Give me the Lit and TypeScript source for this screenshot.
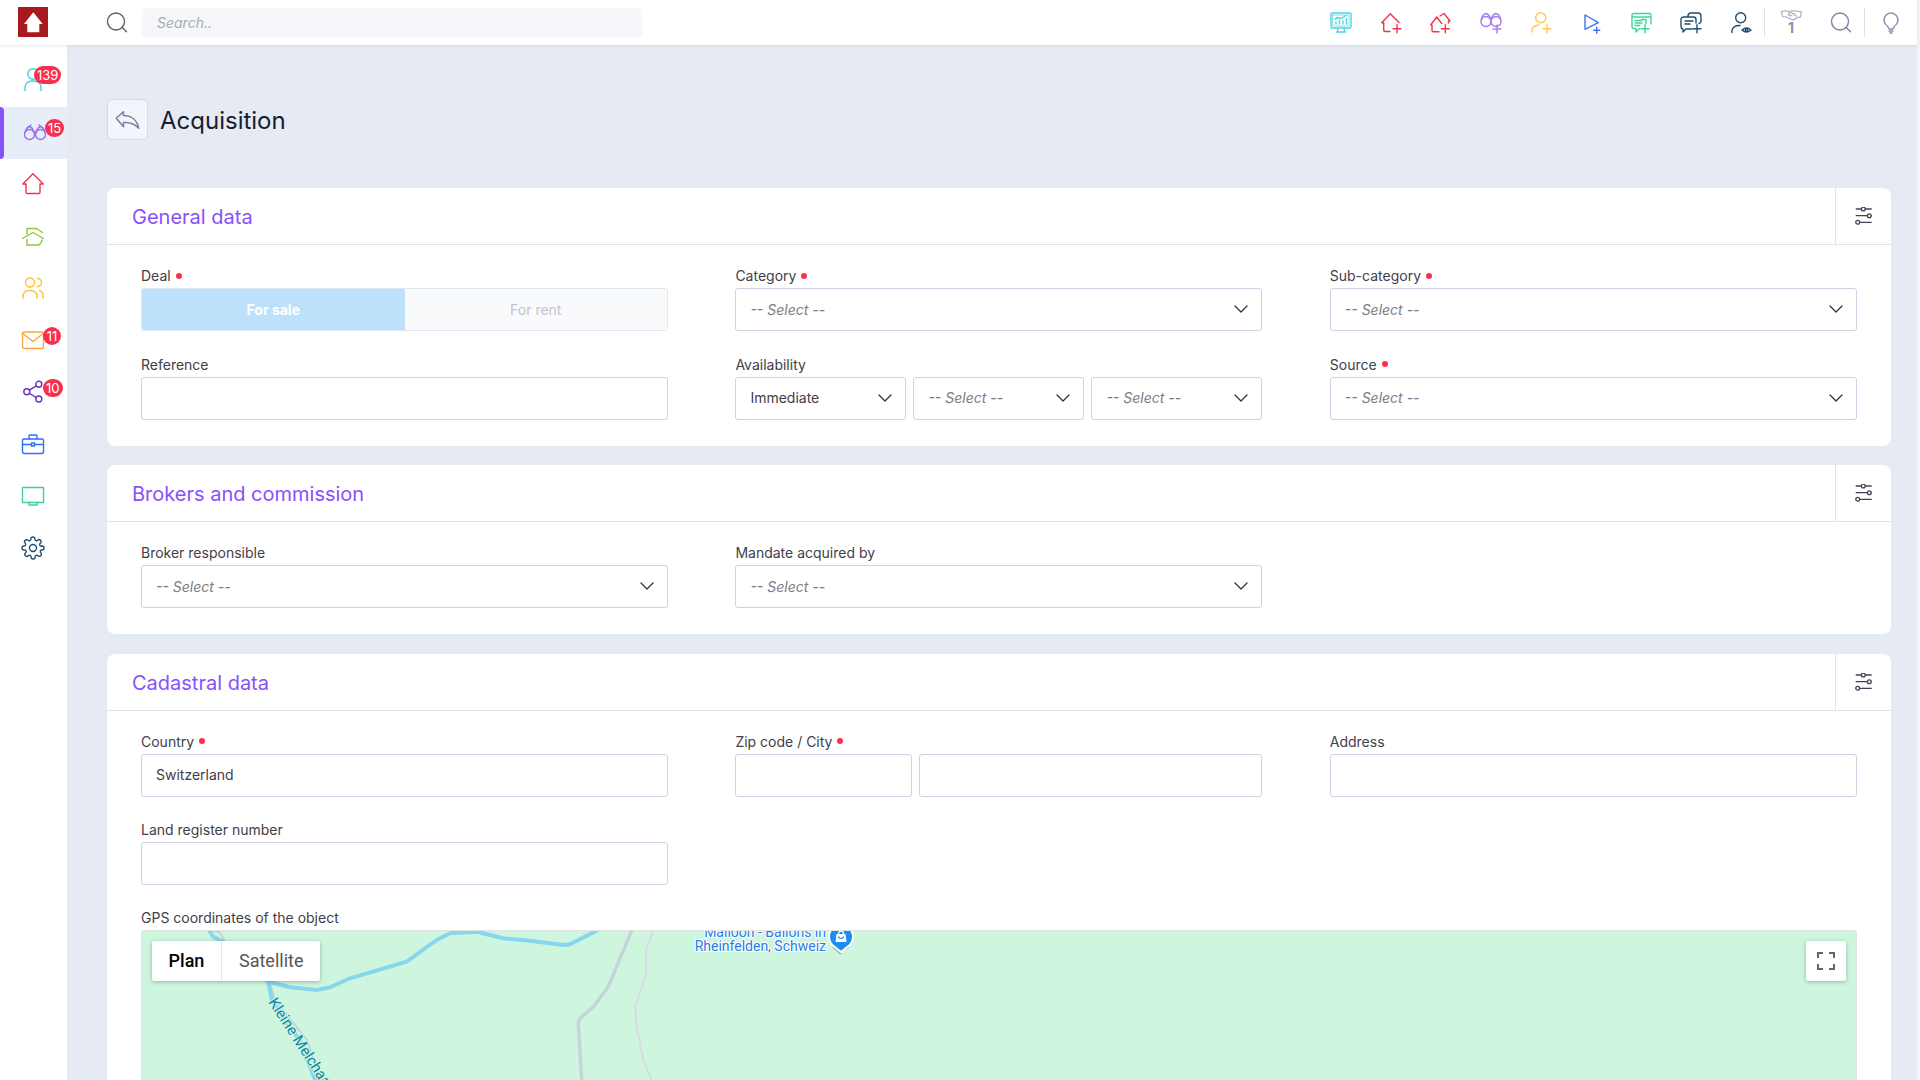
import { LitElement, html, svg, css } from 'lit';
import { customElement } from 'lit/decorators.js';

const icon = (body: unknown, size = 24, box = '0 0 24 24') => html`<svg
  width=${size} height=${size} viewBox=${box} fill="none" stroke="currentColor"
  stroke-width="1.4" stroke-linecap="round" stroke-linejoin="round">${body}</svg>`;

const sideIcons = {
  user: icon(svg`<circle cx="12" cy="6" r="5.2"/><path d="M4 22.5v-3.5a7 6 0 0 1 7-6h2a7 6 0 0 1 7 6v3.500"/>`),
  binoculars: icon(svg`<circle cx="6.500" cy="14.500" r="5"/><circle cx="17.500" cy="14.500" r="5"/><path d="M2.200 12Q3 8 6 6.500q3 .5 4.500 4.500l1 1.500M21.800 12Q21 8 18 6.500q-3 .5-4.500 4.500l-1 1.500M11.500 14h1M6 6.500 8 5M18 6.500 16 5"/>`),
  house: icon(svg`<path d="M1.800 12 12 1.800 22.200 12H19v8.500a1 1 0 0 1-1 1H6a1 1 0 0 1-1-1V12Z"/>`),
  deal: icon(svg`<path d="M1.500 14.500 12 8.500l10.500 6M6 10V4.500h9.500l6 4M6 15.500V21h11q3-.5 4-5"/>`),
  users: icon(svg`<circle cx="9" cy="6.500" r="4.500"/><path d="M2 22.500v-2.500a6 5.500 0 0 1 6-5.500h2a6 5.500 0 0 1 6 5.500v2.500M16.500 2.500a4 4 0 0 1 0 8M18.500 14.500a5.500 5.500 0 0 1 3.500 5.500v2.500"/>`),
  mail: icon(svg`<rect x="1.500" y="4" width="21" height="16.500" rx="2"/><path d="M2.500 6 12 13.500 21.500 6"/>`),
  share: icon(svg`<circle cx="5.800" cy="11.700" r="3"/><circle cx="17.800" cy="4.300" r="3"/><circle cx="17.800" cy="19" r="3"/><path d="m8.400 10.200 6.800-4.300M8.400 13.300l6.800 4.200"/>`),
  briefcase: icon(svg`<rect x="1.500" y="7" width="21" height="14.500" rx="1.500"/><path d="M8 7V4a1 1 0 0 1 1-1h6a1 1 0 0 1 1 1v3M1.500 12.500h9M13.500 12.500h9"/><rect x="10.500" y="11" width="3" height="3"/>`),
  monitor: icon(svg`<rect x="1.500" y="3.500" width="21" height="15"/><path d="M8 18.500v2.500h8v-2.500"/>`),
  gear: icon(svg`<circle cx="12" cy="12" r="3.500"/><path d="M19.400 15a1.650 1.650 0 0 0 .33 1.820l.06.06a2 2 0 1 1-2.830 2.830l-.06-.06a1.650 1.650 0 0 0-2.800 1.170V21a2 2 0 0 1-4 0v-.09a1.650 1.650 0 0 0-2.820-1.110l-.06.06a2 2 0 1 1-2.830-2.830l.06-.06A1.650 1.650 0 0 0 3.090 14H3a2 2 0 0 1 0-4h.09A1.650 1.650 0 0 0 4.200 7.180l-.06-.06a2 2 0 1 1 2.830-2.830l.06.06A1.650 1.650 0 0 0 9.850 3.090V3a2 2 0 0 1 4 0v.09a1.650 1.650 0 0 0 2.800 1.110l.06-.06a2 2 0 1 1 2.830 2.830l-.06.06A1.650 1.650 0 0 0 20.910 10H21a2 2 0 0 1 0 4h-.09a1.650 1.650 0 0 0-1.510 1Z"/>`),
};

const plus = (x = 18, y = 17.7, a = 4) => svg`<path d="M${x} ${y - a}v${a * 2}M${x - a} ${y}h${a * 2}"/>`;

const searchGlass = svg`<circle cx="11" cy="10.500" r="8.500"/><path d="m17.300 16.500 4.200 4.200"/>`;

const topIcons = [
  { color: '#4fd3e3', svg: icon(svg`<rect x="2" y="2" width="20" height="15" rx="1"/><rect x="4" y="4" width="16" height="11" stroke-width=".7"/><path d="M7 13v-2M10.500 13V9.500M14 13v-3M17.500 13V7.500M6 8l3-1.500 3 1 5-3M9 17l-.5 3.500M15 17l.5 3.500M7.500 21h9"/>`) },
  { color: '#f5324b', svg: icon(svg`<path d="M2.700 11.700 11.300 2.700 20 11.500M2.700 11.700h2V19a1.500 1.500 0 0 0 1.500 1.500H11"/>${plus()}`) },
  { color: '#f5324b', svg: icon(svg`<path d="M1.700 14 7.700 6l5 6.500M3 14v5.200a1.500 1.500 0 0 0 1.500 1.500H10M11 5l4-2.500 6 7.500h-1.500v2"/>${plus(16.3)}`) },
  { color: '#a27cf0', svg: icon(svg`<circle cx="7" cy="10.500" r="5"/><circle cx="17" cy="10.500" r="5"/><path d="M2.200 9Q3.500 3 7 2.500q3 .5 4.500 5M21.800 9Q20.500 3 17 2.500q-3 .5-4.500 5"/>${plus(18, 18, 4)}`) },
  { color: '#fdc94f', svg: icon(svg`<circle cx="11.700" cy="6.700" r="5"/><path d="M3 21v-2a7 5.500 0 0 1 7-5"/>${plus()}`) },
  { color: '#3b74f6', svg: icon(svg`<path d="M6 4 19.300 11.700 6 18.300Z"/>${plus(17.7, 19.3, 3)}`) },
  { color: '#42d39c', svg: icon(svg`<path d="M7 17.500H4.500a1.500 1.500 0 0 1-1.500-1.500V4a1.500 1.500 0 0 1 1.500-1.500h16A1.500 1.500 0 0 1 22 4v9M3 6h19M6 9.500h7M6 12h7M6 14.500h5M13 8.500h4v4M7 17.500v3.500l3.500-3.500"/>${plus(16, 17.7)}`) },
  { color: '#1f4e6e', svg: icon(svg`<path d="M13 18H7l-3 3v-3a2.500 2.500 0 0 1-2-2.500V8.500A2.500 2.500 0 0 1 4.500 6h10A2.500 2.500 0 0 1 17 8.500v3.500M6 10h8M6 13h5M9 6V5a3 3 0 0 1 3-3h7a3 3 0 0 1 3 3v5a2.500 2.500 0 0 1-2 2.500"/>${plus()}`) },
  { color: '#1f4e6e', svg: icon(svg`<circle cx="11.700" cy="6.700" r="5"/><path d="M3 21.500v-2a7 5.500 0 0 1 8-5M13 19q4.500-4 9 0q-4.500 4-9 0Z"/><circle cx="17.500" cy="19" r="1.200"/>`) },
];

const grid3 = (items: unknown[]) => html`<div class="grid">${items}</div>`;

const field = (label: string, required: boolean, control: unknown) => html`
  <div class="field">
    <label>${label}${required ? html`<i class="dot"></i>` : ''}</label>
    ${control}
  </div>`;

const chevron = html`<svg class="chev" width="14" height="8" viewBox="0 0 14 8" fill="none" stroke="#2f3040" stroke-width="1.300" stroke-linecap="round" stroke-linejoin="round"><path d="m1 1 6 6 6-6"/></svg>`;

const select = (value = '') => html`
  <div class="box select">
    <span class=${value ? 'val' : 'ph'}>${value || '-- Select --'}</span>${chevron}
  </div>`;

const input = (value = '') => html`<div class="box">${value ? html`<span class="val">${value}</span>` : ''}</div>`;

@customElement('app-root')
export class AppRoot extends LitElement {
  static styles = css`
    :host {
      display: flex;
      height: 100vh;
      overflow: hidden;
      font-family: Inter, "Liberation Sans", sans-serif;
      font-size: 14px;
      color: #3f4049;
      background: #f4f4f5;
    }
    :host * {
      box-sizing: border-box;
    }
    .page {
      width: 1917px;
      flex: none;
      display: flex;
      flex-direction: column;
      background: #e6eaf3;
    }

    .top {
      height: 45px;
      flex: none;
      display: flex;
      align-items: center;
      background: #fff;
      box-shadow: 0 1px 4px rgba(60, 70, 110, 0.12);
      position: relative;
      z-index: 2;
      padding-right: 1px;
    }
    .logo {
      width: 30px;
      height: 30px;
      margin: 0 0 1px 18px;
      background: #a6191f;
      flex: none;
      display: block;
    }
    .top-search {
      width: 24px;
      height: 24px;
      margin-left: 57px;
      color: #5f6068;
      display: flex;
    }
    .search {
      width: 500px;
      height: 30px;
      margin-left: 13px;
      background: #f5f7fb;
      border-radius: 4px;
      padding-left: 15px;
      font-style: italic;
      color: #a9abb5;
      display: flex;
      align-items: center;
    }
    .top-icons {
      margin-left: auto;
      display: flex;
      align-items: center;
    }
    .ti {
      width: 50px;
      height: 29px;
      display: flex;
      align-items: center;
      justify-content: center;
    }
    .sep {
      width: 52px;
      margin-left: -2px;
      padding-left: 1px;
      border-left: 1px solid #dcdfea;
    }
    .hand {
      flex-direction: column;
      color: #a9acc4;
      font-weight: 700;
      font-size: 14px;
      line-height: 14px;
    }
    .hand span {
      color: #8a8fa8;
    }

    .body {
      flex: 1;
      display: flex;
      min-height: 0;
    }
    .side {
      width: 67px;
      flex: none;
      background: #fff;
      padding-top: 10px;
    }
    .si {
      height: 52px;
      display: flex;
      align-items: center;
      justify-content: center;
      position: relative;
      padding-right: 1px;
      padding-bottom: 2px;
    }
    .si.active {
      background: #e8eef8;
    }
    .si.active::before {
      content: "";
      position: absolute;
      left: 0;
      top: 0;
      bottom: 0;
      width: 4px;
      background: #8950fc;
      border-radius: 0 4px 4px 0;
    }
    .ic {
      position: relative;
      display: flex;
    }
    .badge {
      position: absolute;
      height: 18px;
      min-width: 18px;
      padding: 0 3px;
      border-radius: 9px;
      background: #f9304d;
      color: #fff;
      font-size: 13px;
      line-height: 18px;
      text-align: center;
      left: 22px;
      top: -1px;
    }
    .badge.wide {
      left: 13px;
      top: -2px;
      min-width: 26px;
    }

    .main {
      flex: 1;
      min-width: 0;
      padding: 54px 26px 0 40px;
    }
    .title-row {
      display: flex;
      align-items: center;
      gap: 12px;
      margin-bottom: 48px;
    }
    .back {
      width: 41px;
      height: 41px;
      display: flex;
      align-items: center;
      justify-content: center;
      background: #f3f5fb;
      border: 1px solid #d5d8e5;
      border-radius: 5px;
      color: #7b80a0;
    }
    h1 {
      margin: 0;
      padding-top: 2px;
      font-size: 24px;
      font-weight: 400;
      color: #181c32;
    }

    .card {
      background: #fff;
      border-radius: 8px;
      margin-bottom: 19.5px;
    }
    .card-head {
      height: 57px;
      display: flex;
      align-items: center;
      justify-content: space-between;
      border-bottom: 1px solid #e1e3ea;
      padding-left: 25px;
    }
    h2 {
      margin: 0;
      padding-top: 2px;
      font-size: 20px;
      font-weight: 400;
      color: #8950fc;
    }
    .tune {
      width: 56px;
      height: 100%;
      border-left: 1px solid #e1e3ea;
      display: flex;
      align-items: center;
      justify-content: center;
    }
    .card-body {
      padding: 23px 34px 26px;
    }
    .grid {
      display: grid;
      grid-template-columns: repeat(3, 527px);
      column-gap: 67.4px;
      row-gap: 25.5px;
    }
    .grid.tight {
      row-gap: 25px;
    }
    label {
      display: flex;
      align-items: center;
      height: 17px;
      line-height: 17px;
      margin: -1px 0 4px;
    }
    .dot {
      width: 6px;
      height: 6px;
      margin-left: 5px;
      border-radius: 50%;
      background: #f9304d;
    }
    .box {
      height: 43px;
      border: 1px solid #d2d0e3;
      border-radius: 3px;
      background: #fff;
      display: flex;
      align-items: center;
      padding: 0 14px 1px;
    }
    .select {
      justify-content: space-between;
      padding-right: 13px;
    }
    .chev {
      flex: none;
    }
    .ph {
      font-style: italic;
      color: #7a7b84;
    }
    .val {
      color: #3f4049;
    }
    .toggle {
      height: 43px;
      display: flex;
      border: 1px solid #e4e6ef;
      border-radius: 3px;
      overflow: hidden;
      font-size: 14px;
    }
    .toggle div {
      flex: 1;
      display: flex;
      align-items: center;
      justify-content: center;
    }
    .on {
      background: #bde1fa;
      color: #fff;
      font-weight: 700;
    }
    .off {
      background: #f9fafc;
      color: #c3c4cc;
    }
    .triple {
      display: flex;
      gap: 7px;
    }
    .triple .box {
      flex: 1;
    }
    .zip {
      display: grid;
      grid-template-columns: 177px 1fr;
      gap: 7px;
    }

    .map {
      position: relative;
      height: 300px;
      width: 100%;
      background: #cef6df;
      border: 1px solid #e2e2e2;
      border-radius: 3px 3px 0 0;
      overflow: hidden;
      font-family: Roboto, sans-serif;
    }
    .map svg.land {
      display: block;
      position: absolute;
      left: -1px;
      top: -1px;
    }
    .map-type {
      position: absolute;
      left: 10px;
      top: 10px;
      height: 40px;
      display: flex;
      background: #fff;
      border-radius: 2px;
      box-shadow: 0 1px 4px rgba(0, 0, 0, 0.28);
      font-size: 18px;
      line-height: 40px;
      color: #565656;
    }
    .map-type span {
      padding: 0 17px;
    }
    .map-type .sel {
      width: 70px;
      padding: 0;
      text-align: center;
      color: #000;
      font-weight: 500;
      border-right: 1px solid #e6e6e6;
    }
    .fs {
      position: absolute;
      right: 10px;
      top: 10px;
      width: 40px;
      height: 40px;
      background: #fff;
      border-radius: 2px;
      box-shadow: 0 1px 4px rgba(0, 0, 0, 0.28);
      display: flex;
      align-items: center;
      justify-content: center;
    }
  `;

  render() {
    const rows = [
      { i: sideIcons.user, c: '#3fcfdc', b: '139', wide: true },
      { i: sideIcons.binoculars, c: '#9d6cf5', b: '15', active: true, shift: true },
      { i: sideIcons.house, c: '#f5324b' },
      { i: sideIcons.deal, c: '#8fc73e' },
      { i: sideIcons.users, c: '#fdc13a' },
      { i: sideIcons.mail, c: '#fda63b', b: '11' },
      { i: sideIcons.share, c: '#6a2fc7', b: '10' },
      { i: sideIcons.briefcase, c: '#2c6ef5' },
      { i: sideIcons.monitor, c: '#3ecf9b' },
      { i: sideIcons.gear, c: '#1d4e74' },
    ];
    const tune = html`<div class="tune">
      <svg width="18" height="18" viewBox="0 0 18 18" fill="none" stroke="#3f4254" stroke-width="1.300">
        <path d="M.7 2h16M.7 8.700h16M.7 15.300h16"/>
        <circle cx="8.300" cy="2" r="1.900" fill="#fff"/>
        <circle cx="14.300" cy="8.700" r="1.900" fill="#fff"/>
        <circle cx="2.700" cy="15.300" r="1.900" fill="#fff"/>
      </svg>
    </div>`;

    return html`
      <div class="page">
        <header class="top">
          <svg class="logo" viewBox="0 0 30 30"><path fill="#fff" d="M15.300 5.300 6 17h3.300v8.300h12V17h3.400Z"/></svg>
          <div class="top-search">${icon(searchGlass)}</div>
          <div class="search">Search..</div>
          <div class="top-icons">
            ${topIcons.map(t => html`<div class="ti" style="color:${t.color}">${t.svg}</div>`)}
            <div class="ti sep hand">
              <svg width="21" height="11" viewBox="0 0 21 11" fill="none" stroke="currentColor" stroke-width="1.200" stroke-linejoin="round"><path d="M.5 1.500 5 .8l3 1 3-1 4.500.2 5 .8-1 5-2.500.5-4 2.500-2.500-.5L5 7 1.500 6.500ZM7 4.500l2-2 3.500 1 3 3M7 4.500 9.500 6l2-1"/></svg>
              <span>1</span>
            </div>
            <div class="ti" style="color:#7e83a4">${icon(searchGlass)}</div>
            <div class="ti sep" style="color:#8a8eaa">
              ${icon(svg`<path d="M8.500 15a7 7 0 1 1 7 0L14 18h-4ZM10 20h4M11 22h2"/>`)}
            </div>
          </div>
        </header>
        <div class="body">
          <nav class="side">
            ${rows.map(r => html`
              <div class="si ${r.active ? 'active' : ''}">
                <div class="ic" style="color:${r.c};${r.shift ? 'margin-left:4px' : ''}">
                  ${r.i}
                  ${r.b ? html`<span class="badge ${r.wide ? 'wide' : ''}">${r.b}</span>` : ''}
                </div>
              </div>`)}
          </nav>
          <main class="main">
            <div class="title-row">
              <div class="back">
                <svg width="25" height="24" viewBox="0 0 25 24" fill="none" stroke="currentColor" stroke-width="1.500" stroke-linejoin="round"><path d="M1.200 10.300 8.500 3.700v3.800c7.500 0 13.500 4.500 15.300 12.800-3.800-4.300-8.800-6.300-15.300-5.800v4.200Z"/></svg>
              </div>
              <h1>Acquisition</h1>
            </div>

            <section class="card">
              <div class="card-head"><h2>General data</h2>${tune}</div>
              <div class="card-body">
                ${grid3([
                  field('Deal', true, html`<div class="toggle"><div class="on">For sale</div><div class="off">For rent</div></div>`),
                  field('Category', true, select()),
                  field('Sub-category', true, select()),
                  field('Reference', false, input()),
                  field('Availability', false, html`<div class="triple">${select('Immediate')}${select()}${select()}</div>`),
                  field('Source', true, select()),
                ])}
              </div>
            </section>

            <section class="card">
              <div class="card-head"><h2>Brokers and commission</h2>${tune}</div>
              <div class="card-body">
                ${grid3([
                  field('Broker responsible', false, select()),
                  field('Mandate acquired by', false, select()),
                ])}
              </div>
            </section>

            <section class="card">
              <div class="card-head"><h2>Cadastral data</h2>${tune}</div>
              <div class="card-body">
                <div class="grid tight">
                  ${field('Country', true, input('Switzerland'))}
                  ${field('Zip code / City', true, html`<div class="zip">${input()}${input()}</div>`)}
                  ${field('Address', false, input())}
                  ${field('Land register number', false, input())}
                  <div></div><div></div>
                  <div style="grid-column: 1 / -1">
                    ${field('GPS coordinates of the object', false, this.renderMap())}
                  </div>
                </div>
              </div>
            </section>
          </main>
        </div>
      </div>
    `;
  }

  renderMap() {
    return html`<div class="map">
      <svg class="land" width="1716" height="300" fill="none" stroke-linecap="round" stroke-linejoin="round">
        <path stroke="#c6d2dc" stroke-width="3.500" d="M490.700 .7 467.300 56.700 452.300 76.700 439 88.300 437.300 93.300 440.700 150"/>
        <path stroke="#d5dfe3" stroke-width="2.200" d="M512.300 .7 505 20V45L494.300 76.700 495.700 96.700 502.300 130 510.700 150"/>
        <path stroke="#c6d2dc" stroke-width="2" d="M70 0q3 2 8 2 4 4 6 10l46 44 4 14 32 40 14 40"/>
        <path stroke="#88d5ee" stroke-width="4" d="M69 1.700 72.300 6.700 82.300 11.700 127.300 51.700 149 57.300 175.700 60 189 57.300 209 48.300 265.700 31.700 295.700 10 309 3.300 335.700 1.700 362 8.300 389 10.700 422.300 15 429 14.300 455.700 .7"/>
        <path stroke="#88d5ee" stroke-width="4" d="M127.300 51.700 130.700 70 145.700 93.300 159 110 169 136.700 174 150"/>
        <text x="127" y="72" transform="rotate(57 127 72)" font-family="Roboto, sans-serif" font-size="15" fill="#0b86a6" stroke="#cef6df" stroke-width="2" paint-order="stroke">Kleine Melchaa</text>
        <g font-family="Roboto, sans-serif" font-size="14" fill="#2b7be8" stroke="#fff" stroke-width="2" paint-order="stroke" text-anchor="end">
          <text x="685" y="7">Malloon - Ballons in</text>
          <text x="685" y="21">Rheinfelden, Schweiz</text>
        </g>
        <path fill="#9fb0a8" d="M691 17q9 9 9 7t9-7Z"/>
        <path fill="#1e8cf5" stroke="#fff" stroke-width="2" d="M688 6.700a12 12 0 1 1 21 8L700 22l-9-7.300a12 12 0 0 1-3-8Z"/>
        <path fill="#fff" d="M695.500 4h9l1 8h-11Z"/>
        <path stroke="#fff" stroke-width="1.300" d="M697.500 4a2.500 3 0 0 1 5 0"/>
        <path stroke="#1e8cf5" stroke-width="1.200" d="M697.500 7q2.500 3 5 0"/>
      </svg>
      <div class="map-type"><span class="sel">Plan</span><span>Satellite</span></div>
      <div class="fs">
        <svg width="18" height="18" viewBox="0 0 18 18" fill="none" stroke="#666" stroke-width="2"><path d="M1 6V1h5M12 1h5v5M17 12v5h-5M6 17H1v-5"/></svg>
      </div>
    </div>`;
  }
}
